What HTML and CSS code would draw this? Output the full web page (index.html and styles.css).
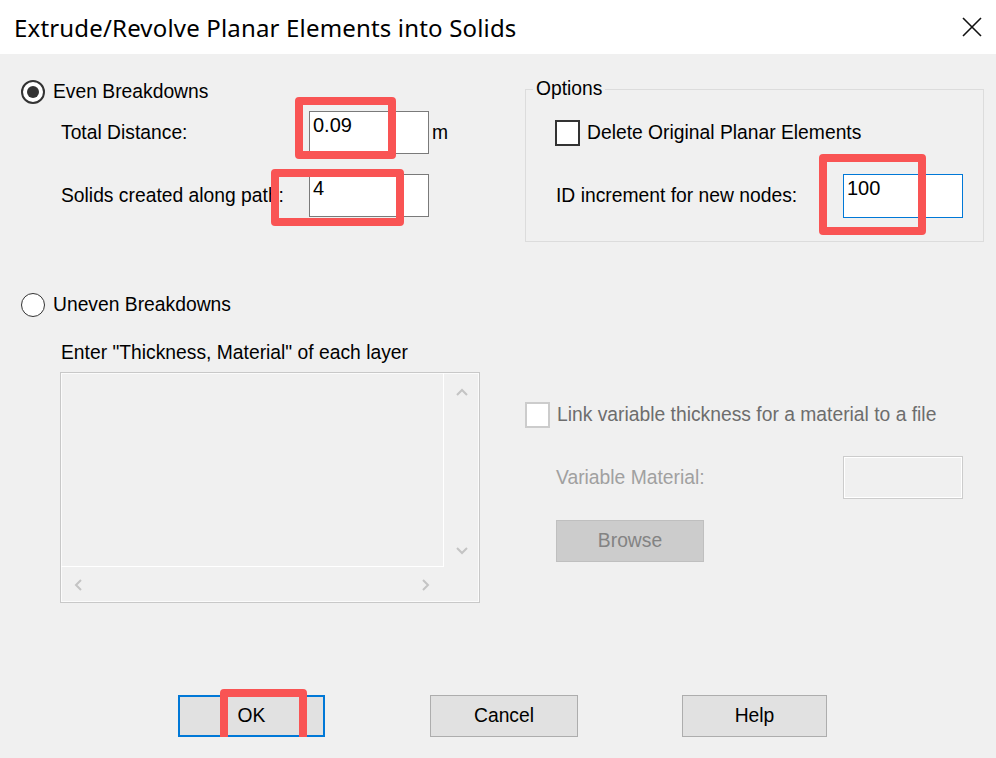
FILE: index.html
```html
<!DOCTYPE html>
<html>
<head>
    <title>Extrude/Revolve Planar Elements into Solids</title>
    <link rel="stylesheet" href="styles.css">
</head>
<body>

    <!-- Window caption -->
    <div class="titlebar">
        <span class="title">Extrude/Revolve Planar Elements into Solids</span>
        <svg class="close" width="20" height="20" viewBox="0 0 20 20">
            <path d="M1 1 L19 19 M19 1 L1 19" stroke="#111" stroke-width="1.6" fill="none"/>
        </svg>
    </div>

    <div class="content">

        <!-- Even breakdowns -->
        <div class="even">
            <div class="radio-row">
                <span class="radio checked"></span>
                <span>Even Breakdowns</span>
            </div>
            <div class="field-row">
                <span class="field-label">Total Distance:</span>
                <div class="textbox">0.09<span class="mark mark-distance"></span></div>
                <span class="unit">m</span>
            </div>
            <div class="field-row second">
                <span class="field-label">Solids created along path:</span>
                <div class="textbox">4<span class="mark mark-solids"></span></div>
            </div>
        </div>

        <fieldset class="options">
            <legend>Options</legend>
            <div class="options-body">
                <div class="check-row">
                    <span class="checkbox"></span>
                    <span>Delete Original Planar Elements</span>
                </div>
                <div class="id-row">
                    <span>ID increment for new nodes:</span>
                    <div class="textbox focused">100<span class="mark mark-id"></span></div>
                </div>
            </div>
        </fieldset>

        <!-- Uneven breakdowns -->
        <div class="uneven">
            <div class="radio-row">
                <span class="radio"></span>
                <span>Uneven Breakdowns</span>
            </div>
            <div class="layers-label">Enter "Thickness, Material" of each layer</div>
            <div class="listbox">
                <div class="list-area"></div>
                <div class="vscroll">
                    <svg width="12" height="8" viewBox="0 0 12 8"><path d="M1 7 L6 2 L11 7" fill="none" stroke="#c4c4c4" stroke-width="2"/></svg>
                    <svg width="12" height="8" viewBox="0 0 12 8"><path d="M1 1 L6 6 L11 1" fill="none" stroke="#c4c4c4" stroke-width="2"/></svg>
                </div>
                <div class="hscroll">
                    <svg width="8" height="12" viewBox="0 0 8 12"><path d="M7 1 L2 6 L7 11" fill="none" stroke="#c4c4c4" stroke-width="2"/></svg>
                    <svg width="8" height="12" viewBox="0 0 8 12"><path d="M1 1 L6 6 L1 11" fill="none" stroke="#c4c4c4" stroke-width="2"/></svg>
                </div>
                <div class="corner"></div>
            </div>
        </div>

        <div class="link">
            <div class="check-row disabled">
                <span class="checkbox"></span>
                <span>Link variable thickness for a material to a file</span>
            </div>
            <div class="id-row material">
                <span>Variable Material:</span>
                <div class="textbox disabled"></div>
            </div>
            <div class="browse">Browse</div>
        </div>

    </div>

    <div class="buttons">
        <div class="btn default">OK<span class="mark mark-ok"></span></div>
        <div class="btn cancel">Cancel</div>
        <div class="btn help">Help</div>
    </div>

</body>
</html>
```

FILE: styles.css
```css
body { margin: 0; background: #f0f0f0; font-family: "Liberation Sans", Arial, sans-serif; font-size: 19.3px; color: #000; }

.titlebar { height: 54px; background: #fff; display: flex; align-items: center; justify-content: space-between; padding: 0 14px; }
.title { font-family: "Noto Sans", "Open Sans", sans-serif; font-size: 24px; letter-spacing: 0.17px; }

.content { display: grid; grid-template-columns: 459px 459px; column-gap: 45px; padding: 26px 12px 0 21px; align-items: start; }

.radio-row, .check-row { display: flex; align-items: center; height: 24px; }
.radio { width: 24px; height: 24px; box-sizing: border-box; border: 2px solid #333; border-radius: 50%; background: #fff; margin-right: 8px; display: flex; align-items: center; justify-content: center; }
.radio.checked::after { content: ""; width: 12px; height: 12px; border-radius: 50%; background: #333; }

.field-row { display: flex; align-items: center; padding-left: 40px; margin-top: 7px; }
.field-row.second { margin-top: 20px; }
.field-label { width: 248px; white-space: nowrap; }
.unit { margin-left: 3px; }

.textbox { position: relative; width: 120px; height: 43px; box-sizing: border-box; border: 1px solid #7a7a7a; background: #fff; font-size: 20px; padding: 2px 3px; line-height: 23px; }
.textbox.focused { border-color: #0078d7; height: 44px; }
.textbox.disabled { border: 1px solid #cccccc; background: #f0f0f0; box-shadow: inset 0 0 0 1px #fff; }

/* red call-out frames */
.mark { position: absolute; border: 8px solid #f95454; border-radius: 4px; box-sizing: border-box; }
.mark-distance { left: -15px; top: -15px; width: 101px; height: 62px; }
.mark-solids { left: -39px; top: -6px; width: 133px; height: 57px; }
.mark-id { left: -25px; top: -21px; width: 107px; height: 81px; }
.mark-ok { left: 40px; top: -8px; width: 87px; height: 66px; }

.options { margin: -2px 0 0; padding: 0; border: 1px solid #dcdcdc; min-width: 0; }
.options legend { margin-left: 7px; padding: 0 3px; line-height: 22px; }
.options-body { padding: 20px 20px 23px 29px; }
.checkbox { width: 25px; height: 26px; box-sizing: border-box; border: 2px solid #333; background: #fff; margin-right: 7px; }
.check-row { height: 26px; }
.id-row { display: flex; align-items: center; justify-content: space-between; margin-top: 28px; padding-left: 1px; }

.uneven .radio-row { margin-top: 50px; height: 25px; }
.uneven .radio { border-width: 1.5px; }
.layers-label { margin: 25px 0 0 40px; line-height: 22px; }

.listbox { margin: 8px 0 0 39px; height: 231px; box-sizing: border-box; border: 1px solid #c8c8c8; box-shadow: inset 0 0 0 1px #fbfbfb; display: grid; grid-template-columns: 1fr 35px; grid-template-rows: 1fr 35px; }
.list-area { border-right: 1px solid #fff; border-bottom: 1px solid #fff; }
.vscroll { display: flex; flex-direction: column; align-items: center; justify-content: space-between; padding: 15px 0 12px; }
.hscroll { display: flex; align-items: center; justify-content: space-between; padding: 0 14px 0 13px; }

.link { padding-top: 160px; color: #6d6d6d; }
.link .checkbox { border-color: #cccccc; }
.link .material { margin-top: 28px; padding: 0 21px 0 31px; color: #a0a0a0; }
.browse { margin: 21px 0 0 31px; width: 148px; height: 42px; box-sizing: border-box; background: #cccccc; border: 1px solid #bfbfbf; color: #838383; display: flex; align-items: center; justify-content: center; }

.buttons { display: flex; gap: 105px; padding-left: 178px; margin-top: 92px; }
.btn { position: relative; width: 148px; height: 42px; box-sizing: border-box; background: #e1e1e1; border: 1px solid #adadad; display: flex; align-items: center; justify-content: center; }
.btn.default { width: 147px; border: 2px solid #0078d7; }
.btn.help { width: 145px; margin-left: -1px; }
```
